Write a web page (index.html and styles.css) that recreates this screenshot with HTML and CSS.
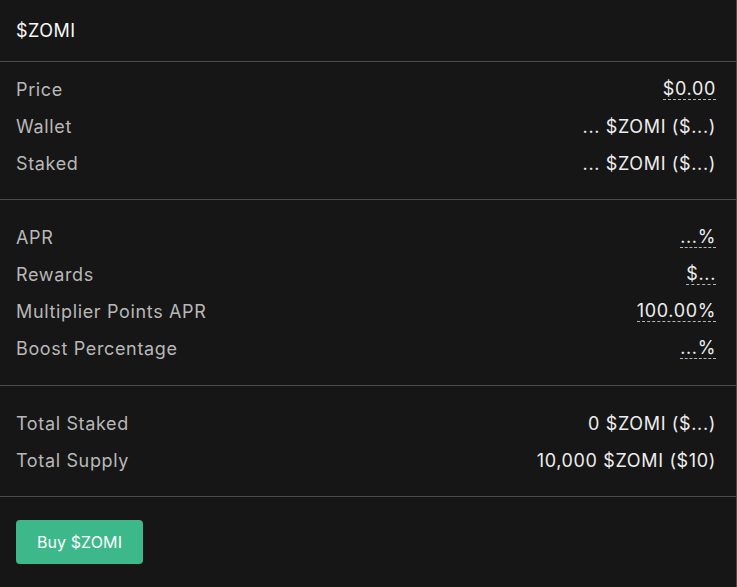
FILE: index.html
```html
<!DOCTYPE html>
<html>
<head>
<meta charset="utf-8">
<link rel="stylesheet" href="styles.css">
</head>
<body>
<div class="card">
  <div class="card-title">$ZOMI</div>
  <div class="section section-first">
    <div class="row"><span class="label">Price</span><span class="value"><span class="tip">$0.00</span></span></div>
    <div class="row"><span class="label">Wallet</span><span class="value">... $ZOMI ($...)</span></div>
    <div class="row"><span class="label">Staked</span><span class="value">... $ZOMI ($...)</span></div>
  </div>
  <div class="section section-rates">
    <div class="row"><span class="label">APR</span><span class="value"><span class="tip">...%</span></span></div>
    <div class="row"><span class="label">Rewards</span><span class="value"><span class="tip">$...</span></span></div>
    <div class="row"><span class="label">Multiplier Points APR</span><span class="value"><span class="tip">100.00%</span></span></div>
    <div class="row"><span class="label">Boost Percentage</span><span class="value"><span class="tip">...%</span></span></div>
  </div>
  <div class="section">
    <div class="row"><span class="label">Total Staked</span><span class="value">0 $ZOMI ($...)</span></div>
    <div class="row"><span class="label">Total Supply</span><span class="value">10,000 $ZOMI ($10)</span></div>
  </div>
  <div class="section section-actions">
    <button class="btn">Buy $ZOMI</button>
  </div>
</div>
</body>
</html>
```
FILE: styles.css
```css
html, body {
  margin: 0;
  padding: 0;
  background: #161616;
}
body {
  font-family: Inter, "Noto Sans", sans-serif;
  color: #ededed;
}
.card {
  box-sizing: border-box;
  width: 737px;
  height: 587px;
  background: #161616;
  border-right: 1px solid #4b4b4b;
}
.card-title {
  height: 62px;
  box-sizing: border-box;
  display: flex;
  align-items: center;
  padding: 0 16px 1px;
  font-size: 18px;
  letter-spacing: 0.5px;
  color: #f7f7f7;
  border-bottom: 1px solid #4b4b4b;
}
.section {
  padding: 26px 20px 25px 16px;
  display: flex;
  flex-direction: column;
  gap: 15px;
  border-bottom: 1px solid #4b4b4b;
}
.section-first {
  padding-top: 16px;
}
.section-rates {
  padding-bottom: 26px;
}
.row {
  display: flex;
  justify-content: space-between;
  align-items: center;
  height: 22px;
  font-size: 18px;
  letter-spacing: 0.65px;
}
.label {
  color: #b8b8b8;
}
.value {
  color: #ededed;
}
.tip {
  border-bottom: 1px dashed #b5b5b5;
  line-height: 20px;
  display: inline-block;
}
.section-actions {
  border-bottom: none;
  padding-top: 23px;
}
.btn {
  align-self: flex-start;
  width: 127px;
  height: 44px;
  border: none;
  border-radius: 4px;
  background: #3db88a;
  color: #ffffff;
  font-family: Inter, "Noto Sans", sans-serif;
  font-size: 16px;
  letter-spacing: 0.1px;
  cursor: pointer;
}
```
